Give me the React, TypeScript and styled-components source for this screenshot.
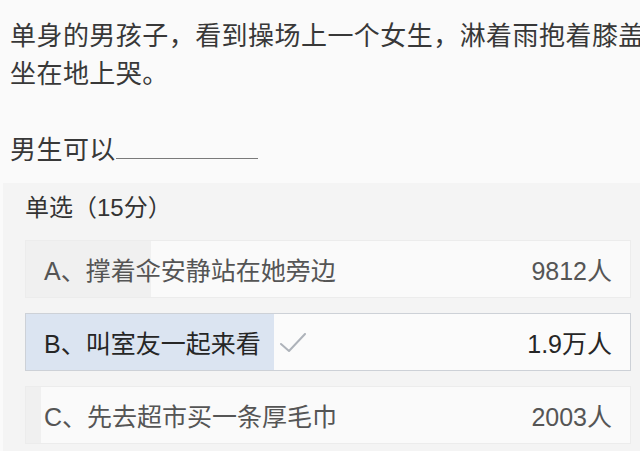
import React from "react";
import styled, { createGlobalStyle } from "styled-components";

const Global = createGlobalStyle`
  html, body {
    margin: 0;
    padding: 0;
    background: #fafafa;
  }
  body {
    font-family: "Liberation Sans", "Noto Sans CJK SC", sans-serif;
    color: #333;
    overflow: hidden;
  }
`;

const Page = styled.div`
  width: 640px;
  height: 451px;
  overflow: hidden;
  display: flex;
  flex-direction: column;
`;

const Question = styled.div`
  padding: 17px 0 0 10px;
  font-size: 26px;
  line-height: 38px;
  letter-spacing: 0.45px;
  color: #383838;
  white-space: nowrap;
`;

const Para = styled.p`
  margin: 0 0 38px;
  &:last-child {
    margin-bottom: 0;
  }
`;

const Line = styled.span`
  display: block;
`;

const Blank = styled.span`
  display: inline-block;
  width: 142px;
  height: 0;
  border-bottom: 1.5px solid #7a7a7a;
  vertical-align: baseline;
`;

const Panel = styled.section`
  margin: 14px 0 0 3px;
  padding: 10px 9px 0 22px;
  background: #f4f4f4;
  flex: 1;
  display: flex;
  flex-direction: column;
`;

const Title = styled.div`
  font-size: 24px;
  line-height: 30px;
  color: #333;
  margin-bottom: 17px;
`;

const Options = styled.div`
  display: flex;
  flex-direction: column;
  gap: 15px;
`;

const Option = styled.div<{ $fill: number; $chosen?: boolean }>`
  height: 58px;
  box-sizing: border-box;
  display: flex;
  align-items: center;
  justify-content: space-between;
  padding: 0 18px;
  font-size: 25px;
  border: 1px solid ${(p) => (p.$chosen ? "#cdd1d7" : "#ececec")};
  background: ${(p) =>
    p.$chosen
      ? `linear-gradient(to right, #dbe4f1 0 ${p.$fill}px, #fbfbfb ${p.$fill}px 100%)`
      : `linear-gradient(to right, #f0f0f0 0 ${p.$fill}px, #fafafa ${p.$fill}px 100%)`};
  color: ${(p) => (p.$chosen ? "#262626" : "#555")};
`;

const Label = styled.span`
  display: flex;
  align-items: center;
  white-space: nowrap;
`;

const Count = styled.span`
  white-space: nowrap;
`;

const Tick = styled.svg`
  width: 27px;
  height: 20px;
  margin-left: 19px;
  margin-top: 2px;
`;

const data = [
  { text: "A、撑着伞安静站在她旁边", count: "9812人", fill: 125 },
  { text: "B、叫室友一起来看", count: "1.9万人", fill: 248, chosen: true },
  { text: "C、先去超市买一条厚毛巾", count: "2003人", fill: 15 },
];

export default function App() {
  return (
    <Page>
      <Global />
      <Question>
        <Para>
          <Line>单身的男孩子，看到操场上一个女生，淋着雨抱着膝盖</Line>
          <Line>坐在地上哭。</Line>
        </Para>
        <Para>
          男生可以
          <Blank />
        </Para>
      </Question>
      <Panel>
        <Title>单选（15分）</Title>
        <Options>
          {data.map((o) => (
            <Option key={o.text} $fill={o.fill} $chosen={o.chosen}>
              <Label>
                {o.text}
                {o.chosen && (
                  <Tick viewBox="0 0 27 20">
                    <polyline
                      points="1,11 9,18 25,1"
                      fill="none"
                      stroke="#aeb3ba"
                      strokeWidth="2"
                      strokeLinecap="round"
                      strokeLinejoin="round"
                    />
                  </Tick>
                )}
              </Label>
              <Count>{o.count}</Count>
            </Option>
          ))}
        </Options>
      </Panel>
    </Page>
  );
}
